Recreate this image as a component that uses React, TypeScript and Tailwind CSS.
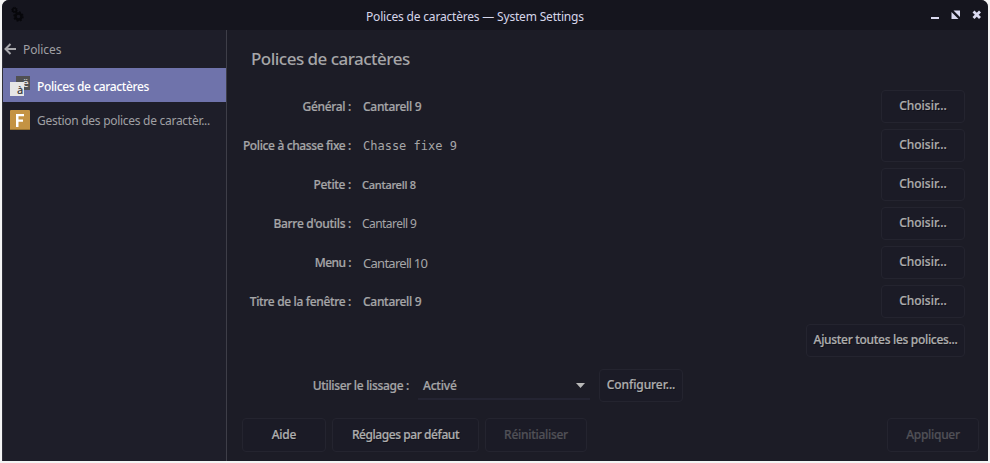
import clsx from "clsx";

type FontRow = {
  label: string;
  labelClass: string;
  value: string;
  valueClass: string;
};

const strong = "font-medium [-webkit-text-stroke:0.2px_currentColor]";

const rows: FontRow[] = [
  { label: "Général :", labelClass: "tracking-[-0.33px]", value: "Cantarell 9", valueClass: clsx("pl-3 tracking-[-0.3px]", strong) },
  { label: "Police à chasse fixe :", labelClass: "tracking-[-0.36px]", value: "Chasse fixe 9", valueClass: "pl-3 pt-px font-['DejaVu_Sans_Mono',monospace]" },
  { label: "Petite :", labelClass: "pt-px tracking-[-0.3px]", value: "Cantarell 8", valueClass: clsx("pl-[11px] pt-px text-[11px] tracking-[-0.25px]", strong) },
  { label: "Barre d'outils :", labelClass: "tracking-[-0.3px]", value: "Cantarell 9", valueClass: "pl-[11px] tracking-[-0.55px]" },
  { label: "Menu :", labelClass: "tracking-[-0.5px]", value: "Cantarell 10", valueClass: "pl-3 pt-0.5 text-[13px] tracking-[-0.72px]" },
  { label: "Titre de la fenêtre :", labelClass: "tracking-[-0.34px]", value: "Cantarell 9", valueClass: clsx("pl-3 tracking-[-0.3px]", strong) },
];

function Button({ children, className, disabled }: { children: string; className?: string; disabled?: boolean }) {
  return (
    <button
      disabled={disabled}
      className={clsx(
        "flex shrink-0 items-center justify-center whitespace-nowrap rounded-[4px] border border-[#24242f] bg-[#1b1b26]",
        strong,
        disabled ? "text-[#515157]" : "text-[#aeaeae] [text-shadow:1px_1px_0_#101018]",
        className,
      )}
    >
      {children}
    </button>
  );
}

function TitleBar() {
  return (
    <header className="flex h-[30px] shrink-0 items-center bg-[#15151e]">
      <svg className="mb-0.5 ml-[9px] h-4 w-4 shrink-0" viewBox="0 0 16 16" fill="none" stroke="#07070b">
        <circle cx="3.5" cy="4" r="1.8" strokeWidth="1.6" />
        <circle cx="3.5" cy="4" r="2.7" strokeWidth="1" strokeDasharray="1.1 1" />
        <circle cx="7.5" cy="10.5" r="3" strokeWidth="2.4" />
        <circle cx="7.5" cy="10.5" r="4.5" strokeWidth="1.4" strokeDasharray="1.8 1.73" />
      </svg>
      <h1 className="ml-[339px] mr-auto whitespace-nowrap pt-[3px] text-[12px] tracking-[-0.19px] text-[#d6d6ea]">Polices de caractères — System Settings</h1>
      <svg className="h-[30px] w-[60px]" viewBox="0 0 60 30" fill="#dadaf0">
        <rect x="3" y="17" width="8" height="2" />
        <path d="M25.500 10.500h6.500v6.500zM23.500 12v7h7z" />
        <path d="M45.500 11.500l6.500 6.500M52 11.500l-6.500 6.500" stroke="#dadaf0" strokeWidth="2.800" />
      </svg>
    </header>
  );
}

function Sidebar() {
  return (
    <nav className="w-[225px] shrink-0 border-l border-r border-l-[#30303a] border-r-[#3e3e48] bg-[#1e1e29] text-[12px] text-[#a0a0a4]">
      <div className="flex h-[38px] items-center">
        <svg className="ml-px h-3 w-[13px]" viewBox="0 0 13 12" fill="none" stroke="#a8a8ac" strokeWidth="2">
          <path d="M12 6H1.500M6.500 1L1.500 6l5 5" />
        </svg>
        <span className="ml-1.5 pt-0.5 tracking-[-0.1px]">Polices</span>
      </div>
      <div className="flex h-[34px] items-center bg-[#6f73ab] text-white">
        <svg className="ml-[7px] mt-px h-5 w-5" viewBox="0 0 20 20">
          <rect x="6" width="14" height="14" fill="#505052" />
          <text x="12.500" y="10.500" fontSize="11" fill="#e6e6e6" fontFamily="Noto Sans, sans-serif">ë</text>
          <rect y="6" width="14" height="14" fill="#e6e6e6" />
          <text x="7" y="18" fontSize="11" fontWeight="500" fill="#38383a" fontFamily="Noto Sans, sans-serif">à</text>
        </svg>
        <span className="ml-[7px] pt-[3px] font-medium tracking-[-0.37px]">Polices de caractères</span>
      </div>
      <div className="flex h-[34px] items-center">
        <svg className="ml-[7px] mt-px h-5 w-5" viewBox="0 0 20 20">
          <rect width="20" height="20" rx="1" fill="#c49343" />
          <rect y="19" width="20" height="1" fill="#99722f" />
          <path d="M6 4h8v2.200H8.500V9.500h4.500v2.200H8.500V17H6z" fill="#fff" />
        </svg>
        <span className="ml-[7px] whitespace-nowrap pt-[3px] tracking-[-0.28px]">Gestion des polices de caractèr...</span>
      </div>
    </nav>
  );
}

export default function App() {
  return (
    <div className="h-[463px] w-[990px] overflow-hidden bg-[#f4f4f4] pl-0.5 font-['Noto_Sans',sans-serif]">
      <div className="flex h-[461px] w-[986px] flex-col overflow-hidden rounded-t-[7px] bg-[#1c1c26]">
        <TitleBar />
        <div className="flex min-h-0 flex-1">
          <Sidebar />
          <main className="flex flex-1 flex-col text-[12px] text-[#a6a6a8]">
            <h2 className="h-[60px] pl-6 pt-[17px] text-[17px] font-medium leading-6 tracking-[-0.52px]">Polices de caractères</h2>
            <div className="flex flex-col gap-1.5 pr-[23px]">
              {rows.map((row) => (
                <div key={row.label} className="flex h-[33px] items-center">
                  <span className={clsx("w-[124px] shrink-0 whitespace-nowrap text-right", strong, row.labelClass)}>{row.label}</span>
                  <span className={clsx("flex-1 whitespace-nowrap", row.valueClass)}>{row.value}</span>
                  <Button className="h-[33px] w-[84px] pb-px">Choisir...</Button>
                </div>
              ))}
              <Button className="h-[33px] w-[159px] self-end pb-px tracking-[-0.31px]">Ajuster toutes les polices...</Button>
            </div>
            <div className="mt-3 flex h-[33px] items-center">
              <span className={clsx("w-[182px] whitespace-nowrap pt-px text-right tracking-[-0.32px]", strong)}>Utiliser le lissage :</span>
              <div className="ml-[9px] flex h-[31px] w-[172px] items-center justify-between self-start border-b-2 border-[#242432] px-[5px] pt-0.5">
                <span className={clsx("pt-0.5 tracking-[-0.2px]", strong)}>Activé</span>
                <svg className="mt-0.5 h-[5px] w-[9px]" viewBox="0 0 9 5" fill="#b8b8b8">
                  <path d="M0 0h9L4.500 5z" />
                </svg>
              </div>
              <Button className="ml-[9px] h-[33px] w-[84px] pb-px tracking-[-0.08px]">Configurer...</Button>
            </div>
            <footer className="mt-4 flex gap-1.5 pl-[15px] pr-[9px]">
              <Button className="h-[34px] w-[84px] tracking-[-0.2px]">Aide</Button>
              <Button className="h-[34px] w-[147px] tracking-[-0.43px]">Réglages par défaut</Button>
              <Button className="h-[34px] w-[102px] tracking-[-0.28px]" disabled>Réinitialiser</Button>
              <Button className="ml-auto h-[34px] w-[92px] tracking-[-0.3px]" disabled>Appliquer</Button>
            </footer>
          </main>
        </div>
      </div>
    </div>
  );
}
